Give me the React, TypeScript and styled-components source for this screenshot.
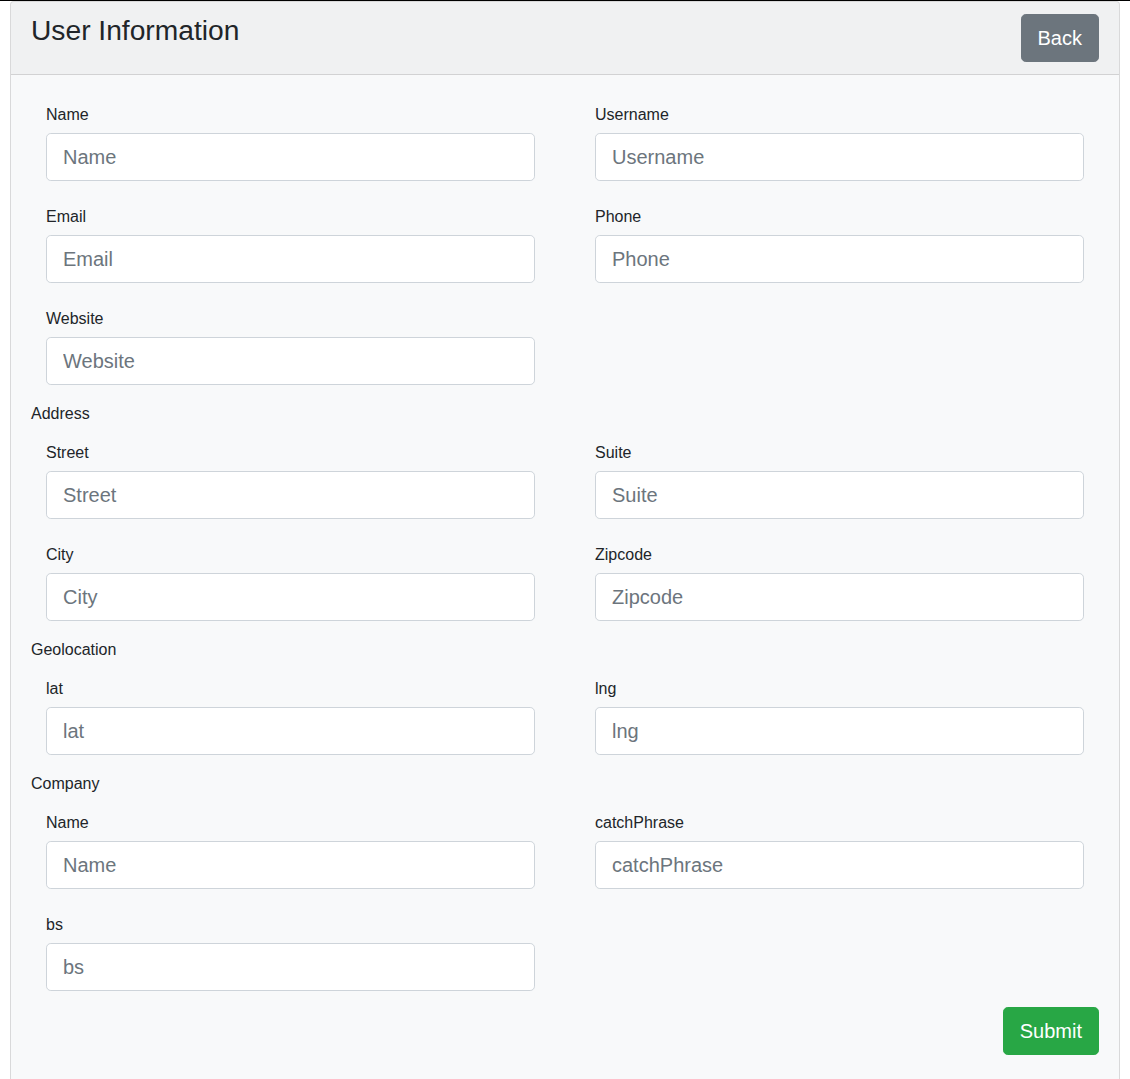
import React from "react";
import styled, { createGlobalStyle } from "styled-components";

const GlobalStyle = createGlobalStyle`
  html, body { margin: 0; padding: 0; background: #fff; }
  body {
    font-family: "Liberation Sans", Arial, sans-serif;
    font-size: 16px;
    line-height: 1.5;
    color: #212529;
  }
  * { box-sizing: border-box; }
`;

const TopRule = styled.div`
  height: 1px;
  background: #000;
`;

const Page = styled.div`
  padding: 0 10px;
`;

const Card = styled.div`
  border: 1px solid rgba(0, 0, 0, 0.125);
  border-radius: 4px;
  background: #f8f9fa;
  overflow: hidden;
`;

const CardHeader = styled.div`
  display: flex;
  justify-content: space-between;
  align-items: flex-start;
  padding: 12px 20px;
  background: rgba(0, 0, 0, 0.03);
  border-bottom: 1px solid rgba(0, 0, 0, 0.125);
`;

const Title = styled.h3`
  margin: 0;
  font-size: 28.2px;
  font-weight: 500;
  line-height: 33.6px;
  color: #212529;
`;

const Button = styled.button<{ $variant: "secondary" | "success" }>`
  font-family: inherit;
  font-size: 20px;
  line-height: 1.5;
  padding: 8px 16px;
  border-radius: 4.8px;
  color: #fff;
  border: 1px solid ${(p) => (p.$variant === "success" ? "#28a745" : "#6c757d")};
  background: ${(p) => (p.$variant === "success" ? "#28a745" : "#6c757d")};
  cursor: pointer;
`;

const CardBody = styled.form`
  padding: 20px 20px 40px;
`;

const SectionTitle = styled.div`
  font-size: 16px;
  line-height: 24px;
  padding-top: 1px;
  margin-bottom: 7px;
`;

const FieldGrid = styled.div`
  display: grid;
  grid-template-columns: 1fr 1fr;
  column-gap: 60px;
  padding: 0 15px;
`;

const Group = styled.div`
  margin-bottom: 16px;
`;

const Label = styled.label`
  display: block;
  padding: 8px 0 6px;
  font-size: 16px;
  line-height: 24px;
`;

const Input = styled.input`
  display: block;
  width: 100%;
  height: 48px;
  padding: 8px 16px;
  font-family: inherit;
  font-size: 20px;
  line-height: 1.5;
  color: #495057;
  background: #fff;
  border: 1px solid #ced4da;
  border-radius: 4.8px;
  &::placeholder { color: #6c757d; opacity: 1; }
`;

const Actions = styled.div`
  display: flex;
  justify-content: flex-end;
`;

type Field = { label: string; id: string };

const Fields = ({ fields }: { fields: Field[] }) => (
  <FieldGrid>
    {fields.map((f) => (
      <Group key={f.id}>
        <Label htmlFor={f.id}>{f.label}</Label>
        <Input id={f.id} placeholder={f.label} />
      </Group>
    ))}
  </FieldGrid>
);

export default function App() {
  return (
    <>
      <GlobalStyle />
      <TopRule />
      <Page>
        <Card>
          <CardHeader>
            <Title>User Information</Title>
            <Button type="button" $variant="secondary">Back</Button>
          </CardHeader>
          <CardBody onSubmit={(e) => e.preventDefault()}>
            <Fields
              fields={[
                { label: "Name", id: "name" },
                { label: "Username", id: "username" },
                { label: "Email", id: "email" },
                { label: "Phone", id: "phone" },
                { label: "Website", id: "website" },
              ]}
            />
            <SectionTitle>Address</SectionTitle>
            <Fields
              fields={[
                { label: "Street", id: "street" },
                { label: "Suite", id: "suite" },
                { label: "City", id: "city" },
                { label: "Zipcode", id: "zipcode" },
              ]}
            />
            <SectionTitle>Geolocation</SectionTitle>
            <Fields
              fields={[
                { label: "lat", id: "lat" },
                { label: "lng", id: "lng" },
              ]}
            />
            <SectionTitle>Company</SectionTitle>
            <Fields
              fields={[
                { label: "Name", id: "cname" },
                { label: "catchPhrase", id: "catchPhrase" },
                { label: "bs", id: "bs" },
              ]}
            />
            <Actions>
              <Button type="submit" $variant="success">Submit</Button>
            </Actions>
          </CardBody>
        </Card>
      </Page>
    </>
  );
}
